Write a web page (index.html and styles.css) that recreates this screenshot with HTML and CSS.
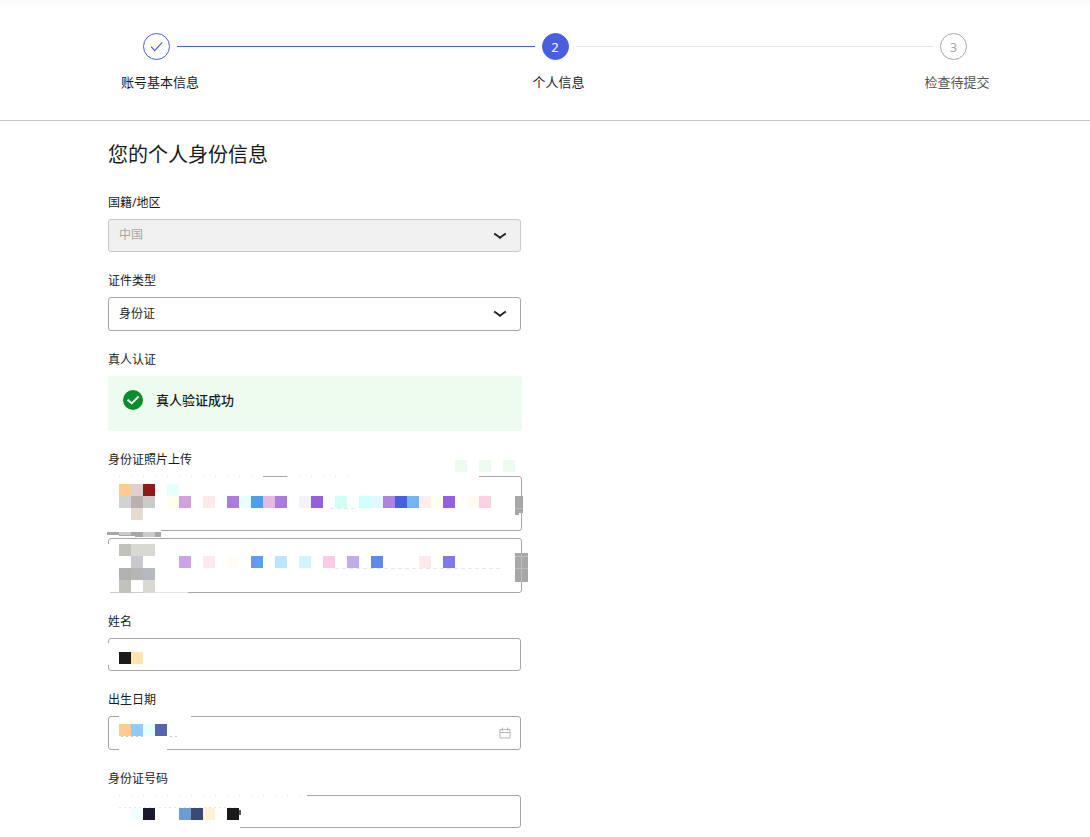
FILE: index.html
```html
<!DOCTYPE html>
<html lang="zh-CN">
  <head>
    <meta charset="UTF-8" />
    <meta name="viewport" content="width=device-width, initial-scale=1.0" />
    <title>个人信息</title>
    <link rel="stylesheet" href="styles.css">
  </head>
  <body>
    <header class="header">
      <ol class="steps">
        <li class="step done">
          <div class="step-head">
            <span class="step-icon">
              <svg width="14" height="12" viewBox="0 0 14 12" fill="none" stroke="currentColor" stroke-width="1.2">
                <path d="M1.2 5.7 4.7 9.7 12.2 1.4" />
              </svg>
            </span>
            <span class="step-line"></span>
          </div>
          <div class="step-title">账号基本信息</div>
        </li>
        <li class="step active">
          <div class="step-head">
            <span class="step-icon">2</span>
            <span class="step-line"></span>
          </div>
          <div class="step-title">个人信息</div>
        </li>
        <li class="step">
          <div class="step-head">
            <span class="step-icon">3</span>
          </div>
          <div class="step-title">检查待提交</div>
        </li>
      </ol>
    </header>

    <main class="main">
      <h1>您的个人身份信息</h1>
      <form class="form">
        <div class="field">
          <label for="country">国籍/地区</label>
          <div class="control">
            <select id="country" disabled>
              <option>中国</option>
            </select>
            <svg class="arrow" width="14" height="8" viewBox="0 0 14 8">
              <path d="M1.2 1.5C4 3.4 5.4 4.4 7 5.8 8.6 4.4 10 3.4 12.8 1.5" />
            </svg>
          </div>
        </div>

        <div class="field">
          <label for="id-type">证件类型</label>
          <div class="control">
            <select id="id-type" class="tall">
              <option>身份证</option>
            </select>
            <svg class="arrow" width="14" height="8" viewBox="0 0 14 8">
              <path d="M1.2 1.5C4 3.4 5.4 4.4 7 5.8 8.6 4.4 10 3.4 12.8 1.5" />
            </svg>
          </div>
        </div>

        <div class="field">
          <div class="label">真人认证</div>
          <div class="success">
            <svg width="20" height="20" viewBox="0 0 20 20">
              <circle cx="10" cy="10" r="10" fill="#068e2c" />
              <path d="M4.5 9.7 8.7 13.3 15.6 6.5" fill="none" stroke="#fff" stroke-width="1.8" />
            </svg>
            <strong>真人验证成功</strong>
          </div>
        </div>

        <div class="field">
          <div class="label">身份证照片上传</div>
          <div class="photos">
            <div class="photo"></div>
            <div class="photo"></div>
          </div>
          <!-- masked photo data -->
          <svg class="mask" width="436" height="150" viewBox="96 450 436 150">
            <g fill="#fff">
              <path d="M96 474h65v57h-65zM161 474h102v5h-102zM287 474h192v5h-192z" />
              <path d="M106 544h50v50h-50zM156 590h32v4h-32z" />
            </g>
            <path d="M107 532h54v5h-26v-1h-16v-1h-12z" fill="#a7a7a7" />
            <path d="M119 532h12v3h-12zM143 532h12v5h-12z" fill="#cbcbc7" />
            <path d="M110 592.5h45" stroke="#ccc" />
            <path d="M155 592.5h33" stroke="#e6e6e6" />
            <path d="M119 476.5h144M287 476.5h72" stroke="#ddd" stroke-dasharray="1 11" />
            <path d="M515 496h8v17h-4v2h-4z" fill="#a7a7a7" />
            <path d="M515 553h13v29h-13z" fill="#a7a7a7" />
            <path d="M515 508.5h8M515 556.5h13M515 568.5h13M521.5 553v29" stroke="#bdbdbd" />
            <path d="M455 460h12v12h-12zM479 460h12v12h-12zM503 460h12v12h-12z" fill="#eefcf0" />
            <g>
              <rect x="119" y="484" width="12" height="12" fill="#ffcc8f" />
              <rect x="131" y="484" width="12" height="12" fill="#ddd0d0" />
              <rect x="143" y="484" width="12" height="12" fill="#8f1a1a" />
              <rect x="167" y="484" width="12" height="12" fill="#e6ffff" />
              <rect x="119" y="496" width="12" height="12" fill="#d0d3d2" />
              <rect x="131" y="496" width="12" height="12" fill="#bbb0af" />
              <rect x="143" y="496" width="12" height="12" fill="#cbcbc7" />
              <rect x="131" y="508" width="12" height="12" fill="#e4ddcf" />
              <rect x="167" y="496" width="12" height="12" fill="#ffffeb" />
              <rect x="179" y="496" width="12" height="12" fill="#d0a0df" />
              <rect x="203" y="496" width="12" height="12" fill="#ffe9e8" />
              <rect x="227" y="496" width="12" height="12" fill="#ac7bdf" />
              <rect x="239" y="496" width="12" height="12" fill="#e6ffff" />
              <rect x="251" y="496" width="12" height="12" fill="#4aa0ec" />
              <rect x="263" y="496" width="12" height="12" fill="#e6b9e0" />
              <rect x="275" y="496" width="12" height="12" fill="#ac7bdf" />
              <rect x="299" y="496" width="12" height="12" fill="#f3f4fb" />
              <rect x="311" y="496" width="12" height="12" fill="#9460e0" />
              <rect x="335" y="496" width="12" height="12" fill="#d0fff3" />
              <rect x="359" y="496" width="12" height="12" fill="#d0ffff" />
              <rect x="371" y="496" width="12" height="12" fill="#dffbff" />
              <rect x="383" y="496" width="12" height="12" fill="#b183dc" />
              <rect x="395" y="496" width="12" height="12" fill="#485fe0" />
              <rect x="407" y="496" width="12" height="12" fill="#72b5f2" />
              <rect x="419" y="496" width="12" height="12" fill="#ffeef0" />
              <rect x="431" y="496" width="12" height="12" fill="#fffff0" />
              <rect x="443" y="496" width="12" height="12" fill="#945fe5" />
              <rect x="467" y="496" width="12" height="12" fill="#fffbf2" />
              <rect x="479" y="496" width="12" height="12" fill="#ffd0e3" />
            </g>
            <g>
              <rect x="119" y="544" width="12" height="12" fill="#c2c2ba" />
              <rect x="131" y="544" width="24" height="12" fill="#d9d9d1" />
              <rect x="131" y="556" width="12" height="12" fill="#c9c8d0" />
              <rect x="119" y="568" width="12" height="12" fill="#aeb3b0" />
              <rect x="131" y="568" width="12" height="12" fill="#bab5b5" />
              <rect x="143" y="568" width="12" height="12" fill="#b4babf" />
              <rect x="119" y="580" width="12" height="13" fill="#c2c2ba" />
              <rect x="143" y="580" width="12" height="13" fill="#d9d9d1" />
              <rect x="179" y="556" width="12" height="12" fill="#cba3e6" />
              <rect x="203" y="556" width="12" height="12" fill="#ffe9eb" />
              <rect x="227" y="556" width="12" height="12" fill="#fffcf4" />
              <rect x="251" y="556" width="12" height="12" fill="#5c9ff0" />
              <rect x="275" y="556" width="12" height="12" fill="#bce6fb" />
              <rect x="299" y="556" width="12" height="12" fill="#d0f5ff" />
              <rect x="323" y="556" width="12" height="12" fill="#fbcbe6" />
              <rect x="347" y="556" width="12" height="12" fill="#c2aaeb" />
              <rect x="371" y="556" width="12" height="12" fill="#5c8aeb" />
              <rect x="419" y="556" width="12" height="12" fill="#ffe9eb" />
              <rect x="443" y="556" width="12" height="12" fill="#8079ea" />
            </g>
            <path d="M330 508.5h24M335 568.5h168" stroke="#e6e6f5" stroke-dasharray="4 3" />
          </svg>
        </div>

        <div class="field">
          <label for="name">姓名</label>
          <div class="control">
            <input type="text" id="name" />
          </div>
          <svg class="mask" width="436" height="60" viewBox="96 612 436 60">
            <path d="M106 643h8v22h-8z" fill="#fff" />
            <rect x="119" y="652" width="12" height="12" fill="#1a1a1a" />
            <rect x="131" y="652" width="12" height="12" fill="#ffe5ad" />
          </svg>
        </div>

        <div class="field">
          <label for="birthday">出生日期</label>
          <div class="control">
            <input type="text" id="birthday" class="tall" />
            <svg class="calendar" width="12" height="12" viewBox="0 0 12 12" fill="none" stroke="#b5b5b5">
              <path d="M1 2.5h10v8.500H1zM1 5.500h10M3.500.5v3M8.500.5v3" />
            </svg>
          </div>
          <svg class="mask" width="436" height="62" viewBox="96 690 436 62">
            <path d="M119 714h72v5h-72zM119 747h48v5h-48z" fill="#fff" />
            <rect x="119" y="724" width="12" height="12" fill="#ffcc8f" />
            <rect x="131" y="724" width="12" height="12" fill="#8fcbff" />
            <rect x="143" y="724" width="12" height="12" fill="#e6ffff" />
            <rect x="155" y="724" width="12" height="12" fill="#5566ad" />
            <path d="M121 736.5h22M170 736.5h9" stroke="#ccc" stroke-dasharray="2 3" />
          </svg>
        </div>

        <div class="field">
          <label for="id-number">身份证号码</label>
          <div class="control">
            <input type="text" id="id-number" />
          </div>
          <svg class="mask" width="436" height="62" viewBox="96 769 436 62">
            <path d="M106 793h201v5h-201zM106 798h134v32h-134z" fill="#fff" />
            <path d="M119 795.5h188" stroke="#ddd" stroke-dasharray="1 11" />
            <path d="M119 807.5h120" stroke="#e8e8e8" stroke-dasharray="2 3" />
            <rect x="131" y="808" width="12" height="12" fill="#f0ffff" />
            <rect x="143" y="808" width="12" height="12" fill="#1a1a30" />
            <rect x="179" y="808" width="12" height="12" fill="#6b9dd2" />
            <rect x="191" y="808" width="12" height="12" fill="#384b74" />
            <rect x="203" y="808" width="12" height="12" fill="#fff2d4" />
            <rect x="227" y="808" width="12" height="12" fill="#1a1a1a" />
            <path d="M240 810v5" stroke="#556" stroke-width="2" />
          </svg>
        </div>
      </form>
    </main>
  </body>
</html>
```
FILE: styles.css
```css
* {
  padding: 0;
  margin: 0;
  box-sizing: border-box;
}

body {
  font-family: "Noto Sans", "Noto Sans CJK SC", sans-serif;
  font-size: 12px;
  color: #1a1a1a;
  background: linear-gradient(#f9f9f9, #fff 8px) no-repeat #fff;
}

.header {
  padding: 33px 81px 28px 108px;
  border-bottom: 1px solid #c8c8c8;
}

.steps {
  display: flex;
  list-style: none;
}

.step {
  flex: 1;
}

.step:last-child {
  flex: none;
  width: 104px;
}

.step-head {
  display: flex;
  align-items: center;
  gap: 7px;
  padding-left: 35px;
}

.step-icon {
  width: 27px;
  height: 27px;
  display: flex;
  align-items: center;
  justify-content: center;
  border: 1px solid #a7a7a7;
  border-radius: 50%;
  color: #a7a7a7;
  font-size: 13px;
}

.step-line {
  flex: 1;
  height: 1px;
  margin-right: -28px;
  background-color: #e2e2e2;
}

.step-title {
  width: 104px;
  margin-top: 12px;
  font-size: 13px;
  line-height: 20px;
  text-align: center;
  color: #555;
}

.done .step-icon {
  border-color: #485fe0;
  color: #485fe0;
}

.done .step-line {
  background-color: #485fe0;
}

.active .step-icon {
  background-color: #485fe0;
  border-color: #485fe0;
  color: #fff;
}

.done .step-title,
.active .step-title {
  color: #1a1a1a;
}

.main {
  padding: 19px 108px 0;
}

h1 {
  margin-bottom: 24px;
  font-size: 20px;
  font-weight: normal;
  line-height: 30px;
}

.form {
  max-width: 413px;
  display: flex;
  flex-direction: column;
  gap: 20px;
}

.field {
  position: relative;
}

label,
.label {
  display: block;
  margin-bottom: 7px;
  line-height: 18px;
}

.control {
  position: relative;
  display: flex;
}

input,
select {
  width: 100%;
  height: 33px;
  padding: 0 32px 2px 10px;
  font: inherit;
  color: #1a1a1a;
  background-color: #fff;
  border: 1px solid #a7a7a7;
  border-radius: 3px;
  outline: none;
  appearance: none;
}

select:disabled {
  color: #a7a7a7;
  background-color: #f0f0f0;
  border-color: #c8c8c8;
  opacity: 1;
}

.tall {
  height: 34px;
}

.arrow {
  position: absolute;
  top: 13px;
  right: 14px;
  fill: none;
  stroke: #222;
  stroke-width: 2;
}

.calendar {
  position: absolute;
  top: 11px;
  right: 10px;
}

.success {
  height: 55px;
  display: flex;
  gap: 13px;
  padding: 14px 15px;
  margin-right: -1px;
  background-color: #eefcf0;
  border-radius: 3px;
  font-size: 13px;
  line-height: 20px;
}

.success strong {
  font-weight: 500;
}

.photos {
  display: flex;
  flex-direction: column;
  gap: 7px;
  margin-right: -1px;
}

.photo {
  height: 55px;
  border: 1px solid #a7a7a7;
  border-radius: 3px;
}

.mask {
  position: absolute;
  top: -1px;
  left: -12px;
  pointer-events: none;
}
```
